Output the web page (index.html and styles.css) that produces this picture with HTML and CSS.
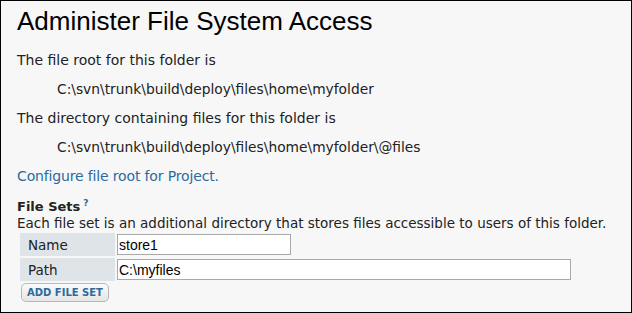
FILE: index.html
```html
<!DOCTYPE html>
<html lang="en">
<head>
    <meta charset="UTF-8">
    <title>Administer File System Access</title>
    <link rel="stylesheet" href="styles.css">
</head>
<body>
    <div class="panel">
        <h1>Administer File System Access</h1>

        <p class="text">The file root for this folder is</p>
        <p class="path">C:\svn\trunk\build\deploy\files\home\myfolder</p>
        <p class="text">The directory containing files for this folder is</p>
        <p class="path">C:\svn\trunk\build\deploy\files\home\myfolder\@files</p>

        <p class="text"><a href="#" class="link">Configure file root for Project.</a></p>

        <div class="file-sets">
            <h2>File Sets<sup>?</sup></h2>
            <p class="desc">Each file set is an additional directory that stores files accessible to users of this folder.</p>
            <table class="sets">
                <tr>
                    <td class="label">Name</td>
                    <td><input type="text" class="name-input" value="store1"></td>
                </tr>
                <tr>
                    <td class="label">Path</td>
                    <td><input type="text" class="path-input" value="C:\myfiles"></td>
                </tr>
            </table>
            <button class="add-btn">ADD FILE SET</button>
        </div>
    </div>
</body>
</html>
```

FILE: styles.css
```css
* {
    margin: 0;
    padding: 0;
    box-sizing: border-box;
}

body {
    font-family: Verdana, "DejaVu Sans", sans-serif;
    font-size: 14px;
    color: #222;
    background: #fff;
}

.panel {
    width: 632px;
    height: 313px;
    background: #f7f7f7;
    border: 1px solid #000;
    padding: 4px 16px 0 16px;
}

h1 {
    font-family: "Liberation Sans", Arial, sans-serif;
    font-weight: normal;
    font-size: 26px;
    color: #000;
    line-height: 32px;
    margin-bottom: 15px;
}

.text {
    line-height: 16px;
    margin-bottom: 13px;
}

.path {
    font-size: 13.8px;
    line-height: 16px;
    margin-bottom: 13px;
    padding-left: 40px;
}

.link {
    color: #2b6a9e;
    text-decoration: none;
    letter-spacing: -0.15px;
}

.file-sets {
    margin-top: 14px;
}

h2 {
    font-size: 13px;
    font-weight: bold;
    line-height: 17px;
}

h2 sup {
    font-size: 9px;
    color: #2b6a9e;
    margin-left: 3px;
    vertical-align: 5px;
    line-height: 0;
}

.desc {
    font-size: 13.5px;
    line-height: 16px;
}

.sets {
    border-collapse: separate;
    border-spacing: 2px;
    margin-left: 1px;
}

.sets td {
    height: 23px;
    padding: 0;
}

.sets .label {
    background: #dfe4e8;
    width: 95px;
    padding-left: 8px;
    font-size: 13.5px;
}

.sets input {
    font-family: "Liberation Sans", Arial, sans-serif;
    font-size: 14px;
    color: #000;
    height: 21px;
    border: 1px solid #a9a9a9;
    background: #fff;
    padding: 0 1px;
    display: block;
}

.name-input {
    width: 174px;
}

.path-input {
    width: 454px;
}

.add-btn {
    margin: 0 0 0 4px;
    font-family: Verdana, "DejaVu Sans", sans-serif;
    font-size: 10px;
    font-weight: bold;
    color: #2b6a9e;
    background: linear-gradient(#fafafa, #e6e6e6);
    border: 1px solid #b8b8b8;
    border-radius: 5px;
    height: 19px;
    width: 88px;
}
```
